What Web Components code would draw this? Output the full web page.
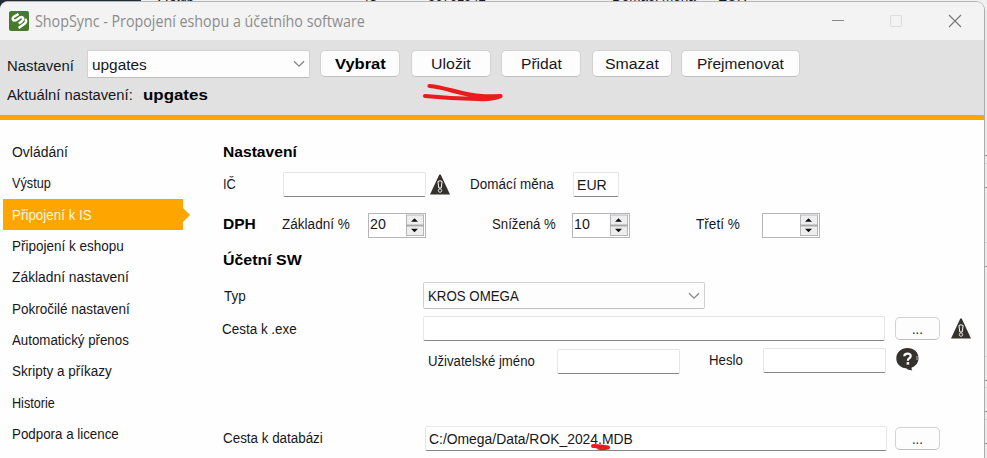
<!DOCTYPE html>
<html lang="cs">
<head>
<meta charset="utf-8">
<title>ShopSync</title>
<style>
html,body{margin:0;height:458px;overflow:hidden}
body{font-family:"Liberation Sans",Arial,sans-serif;font-size:15.5px;color:#17171c}
</style>
</head>
<body>
<shop-sync></shop-sync>
<script>
const sheet = (el, html) => { el.attachShadow({mode:'open'}).innerHTML = html; };

/* A single line of text fitted horizontally to the width in "w". */
class FitText extends HTMLElement {
  connectedCallback() {
    const w = +this.getAttribute('w');
    sheet(this, `<style>:host{display:block;flex:none;width:${w}px;height:20px;line-height:20px;white-space:nowrap}
      :host([b]){font-weight:bold;color:#000}
      span{display:inline-block;transform-origin:0 50%;margin-left:-.3px}</style><span><slot></slot></span>`);
    const s = this.shadowRoot.querySelector('span');
    const n = s.getBoundingClientRect().width;
    if (n) s.style.transform = `scaleX(${(w + .8) / n})`;
  }
}

/* Horizontal row; its height comes from the "h" attribute. */
class UiRow extends HTMLElement {
  connectedCallback() {
    sheet(this, `<style>:host{display:flex;align-items:center;flex:none;height:${this.getAttribute('h')}px}</style><slot></slot>`);
  }
}

class UiButton extends HTMLElement {
  connectedCallback() {
    sheet(this, `<style>:host{display:flex;flex:none;box-sizing:border-box;width:${this.getAttribute('w')}px;height:${this.getAttribute('h') || 27}px;
      align-items:center;justify-content:center;background:#fdfdfd;border:1px solid #d2d2d2;border-bottom-color:#bebebe;border-radius:5px}</style><slot></slot>`);
  }
}

class UiField extends HTMLElement {
  connectedCallback() {
    sheet(this, `<style>:host{display:flex;flex:none;align-items:center;box-sizing:border-box;width:${this.getAttribute('w')}px;height:25px;
      padding-left:3px;background:#fff;border:1px solid #e6e6e6;border-bottom-color:#868686;border-radius:2px}</style><slot></slot>`);
  }
}

class UiSelect extends HTMLElement {
  connectedCallback() {
    sheet(this, `<style>:host{display:flex;flex:none;align-items:center;justify-content:space-between;box-sizing:border-box;width:${this.getAttribute('w')}px;height:${this.getAttribute('h')}px;
      padding:0 4px 0 4px;background:#fdfdfd;border:1px solid #d0d0d0;border-bottom-color:#bdbdbd;border-radius:2px}svg{display:block}</style>
      <slot></slot><svg width="12" height="8" viewBox="0 0 12 8"><path d="M1 1.2 6 6.2 11 1.2" fill="none" stroke="#858585" stroke-width="1.3"/></svg>`);
  }
}

class UiSpin extends HTMLElement {
  connectedCallback() {
    sheet(this, `<style>:host{display:flex;flex:none;align-items:center;justify-content:space-between;box-sizing:border-box;width:58px;height:25px;
      padding:0 1px 0 1px;background:#fff;border:1px solid #b4b4bc}svg{display:block}.v{flex:1;margin-top:-2px}</style>
      <div class="v"><slot></slot></div><svg width="18" height="23" viewBox="0 0 18 23">
      <rect x=".5" y="1" width="17" height="20.5" fill="#eee" stroke="#b5b5b5"/>
      <path d="M0 11.5H18" stroke="#aaa" stroke-width="2"/><path d="M5 7.8 8.5 4.2 12 7.8ZM5 14.7H12L8.5 18.3Z" fill="#111"/></svg>`);
  }
}

class WarnIcon extends HTMLElement {
  connectedCallback() {
    sheet(this, `<style>:host{display:block;flex:none}svg{display:block}</style><svg width="20" height="21" viewBox="0 0 20 21">
      <path d="M9.3.5H10.7L20 20.5H0Z" fill="#35312d"/><path d="M7.900 7.500Q10 6 12.100 7.500L11.200 14H8.800Z" fill="#35312d" stroke="#fff" stroke-width="1"/><circle cx="10" cy="16.600" r="1.700" fill="#35312d" stroke="#eee" stroke-width=".9"/></svg>`);
  }
}

class HelpIcon extends HTMLElement {
  connectedCallback() {
    sheet(this, `<style>:host{display:block;flex:none}svg{display:block}</style><svg width="23" height="23" viewBox="0 0 23 23">
      <path d="M11.5 0C18 0 22.5 4.2 22.5 10C22.5 14.5 20 18 15.7 19.6Q15 21.2 16.3 22.4Q12 22 10 20.3C4 19.8.3 15.5.3 10.2C.3 4.4 5 0 11.5 0Z" fill="#35312d"/>
      <path d="M8.3 8.2Q8.4 5.6 11.6 5.6Q14.7 5.6 14.7 8.1Q14.7 9.6 13 10.5Q11.9 11.1 11.9 12.7" fill="none" stroke="#fff" stroke-width="2.2"/><rect x="10.6" y="14.2" width="2.6" height="2.4" fill="#fff"/><path d="M21 8V12" stroke="#bbb" stroke-width="1"/></svg>`);
  }
}

class TitleBar extends HTMLElement {
  connectedCallback() {
    sheet(this, `<style>:host{display:flex;align-items:center;height:38px;flex:none;background:#f3f3f3;box-sizing:border-box;padding-left:9px;
      font-family:"Open Sans","Noto Sans",sans-serif;font-size:16px;color:#8c8c8c}
      svg{display:block;flex:none}.c{margin-left:468px}fit-text{margin:-1px 0 0 6px}</style>
      <svg width="20" height="20" viewBox="0 0 20 20"><rect width="20" height="20" rx="2" fill="#477a2d"/>
      <path d="M9.500 3 4.600 6Q2.800 8 4.600 9.400Q6 10 8.200 8.400L11.300 6.300Q13.500 5.400 14.200 7.200Q14.500 8.600 12.800 10.200L9.800 12.600" fill="none" stroke="#fff" stroke-width="2.500"/>
      <path d="M16.300 7.800Q18.200 10.500 15.600 12.800L9.600 17" fill="none" stroke="#fff" stroke-width="2.300"/></svg>
      <fit-text w="329">ShopSync - Propojení eshopu a účetního software</fit-text>
      <svg class="c" width="130" height="14" viewBox="0 0 130 14"><path d="M0 6.5H12" stroke="#8a8a8a"/><rect x="58.500" y="1.500" width="11" height="11" rx="1.500" fill="none" stroke="#dcdcdc"/><path d="M117 1 129 13M129 1 117 13" stroke="#777" stroke-width="1.100"/></svg>`);
  }
}

class TopTools extends HTMLElement {
  connectedCallback() {
    sheet(this, `<style>:host{display:block;position:relative;flex:none;background:#e1e1e1;border-bottom:5px solid #ffa500;padding:10px 0 0 7px;box-sizing:content-box;height:65px}
      .r{display:flex;align-items:flex-start}.l{margin-top:6px}ui-button{margin-top:0;padding-top:1px}
      ui-select fit-text{margin-top:2px}
      .s{display:flex;margin-top:7px}.s :last-child{margin-left:11px}
      .ink{position:absolute;left:420px;top:40px}</style>
      <div class="r"><fit-text class="l" w="66">Nastavení</fit-text>
      <ui-select w="223" h="28" style="margin-left:14px"><fit-text w="54">upgates</fit-text></ui-select>
      <ui-button w="80" style="margin-left:10px"><fit-text b w="50">Vybrat</fit-text></ui-button>
      <ui-button w="80" style="margin-left:11px"><fit-text w="39">Uložit</fit-text></ui-button>
      <ui-button w="80" style="margin-left:10px"><fit-text w="40">Přidat</fit-text></ui-button>
      <ui-button w="80" style="margin-left:11px"><fit-text w="53">Smazat</fit-text></ui-button>
      <ui-button w="119" style="margin-left:9px"><fit-text w="86">Přejmenovat</fit-text></ui-button></div>
      <div class="s"><fit-text w="125">Aktuální nastavení:</fit-text><fit-text b w="64">upgates</fit-text></div>
      <svg class="ink" width="90" height="26" viewBox="420 80 90 26"><path d="M429.500 86C446 87.500 458 93.500 476 95.500Q488 96.700 500.500 96.200Q494 99.500 478 99Q452 98.700 425 96M478 97H494" fill="none" stroke="#e81c1c" stroke-width="4.200" stroke-linecap="round" stroke-linejoin="round"/></svg>`);
  }
}

class NavItem extends HTMLElement {
  connectedCallback() {
    sheet(this, `<style>:host{display:flex;align-items:center;height:31.3px;padding-left:9px;box-sizing:border-box;width:180px}
      :host([on]){background:#ffa500;color:#fff6e2}
      i{display:none}:host([on]) i{display:block;flex:none;margin-left:auto;margin-right:-7px;border:7px solid transparent;border-right:0;border-left-color:#ffa500}</style>
      <slot></slot><i></i>`);
  }
}

class SideNav extends HTMLElement {
  connectedCallback() {
    const items = [['Ovládání',55],['Výstup',38],['Připojení k IS',79],['Připojení k eshopu',111],['Základní nastavení',116],['Pokročilé nastavení',117],['Automatický přenos',116],['Skripty a příkazy',99],['Historie',42],['Podpora a licence',106]];
    sheet(this, `<style>:host{display:block;flex:none;width:220px;padding:16.500px 0 0 3px;box-sizing:border-box}</style>` +
      items.map(([t,w],i)=>`<nav-item${i===2?' on':''}><fit-text w="${w}">${t}</fit-text></nav-item>`).join(''));
  }
}

class SettingsForm extends HTMLElement {
  connectedCallback() {
    const m = n => `style="margin-left:${n}px"`;
    sheet(this, `<style>:host{display:flex;flex-direction:column;flex:1;padding-top:16px}
      .db{position:relative}.ink{position:absolute;left:370px;top:18px}</style>
      <ui-row h="32"><fit-text b w="73" ${m(3)}>Nastavení</fit-text></ui-row>
      <ui-row h="32"><fit-text w="12" ${m(3)}>IČ</fit-text><ui-field w="143" ${m(48)}></ui-field><warn-icon ${m(4)}></warn-icon>
        <fit-text w="83" ${m(20)}>Domácí měna</fit-text><ui-field w="46" style="margin:1px 0 0 20px"><fit-text w="29">EUR</fit-text></ui-field></ui-row>
      <ui-row h="48"><fit-text b w="32" ${m(3)}>DPH</fit-text><fit-text w="67" ${m(27)}>Základní %</fit-text><ui-spin style="margin:2px 0 0 19px"><fit-text w="15">20</fit-text></ui-spin>
        <fit-text w="63" ${m(66)}>Snížená %</fit-text><ui-spin style="margin:2px 0 0 17px"><fit-text w="15">10</fit-text></ui-spin>
        <fit-text w="43" ${m(66)}>Třetí %</fit-text><ui-spin style="margin:2px 0 0 23px"></ui-spin></ui-row>
      <ui-row h="24"><fit-text b w="78" ${m(3)}>Účetní SW</fit-text></ui-row>
      <ui-row h="47"><fit-text w="21" ${m(4)}>Typ</fit-text><ui-select w="282" h="27" ${m(178)}><fit-text w="90">KROS OMEGA</fit-text></ui-select></ui-row>
      <ui-row h="19"><fit-text w="74" ${m(2)}>Cesta k .exe</fit-text><ui-field w="462" ${m(127)}></ui-field>
        <ui-button w="45" h="23" ${m(10)}><fit-text w="10">...</fit-text></ui-button><warn-icon ${m(11)}></warn-icon></ui-row>
      <ui-row h="46"><fit-text w="106" ${m(208)}>Uživatelské jméno</fit-text><ui-field w="123" ${m(23)}></ui-field>
        <fit-text w="33" style="margin:-2px 0 0 29px">Heslo</fit-text><ui-field w="123" style="margin:-2px 0 0 21px"></ui-field><help-icon style="margin:-3px 0 0 10px"></help-icon></ui-row>
      <ui-row h="108" class="db"><fit-text w="99" ${m(3)}>Cesta k databázi</fit-text><ui-field w="462" style="margin:1px 0 0 103px"><fit-text w="203">C:/Omega/Data/ROK_2024.MDB</fit-text></ui-field>
        <ui-button w="45" h="23" style="margin:1px 0 0 8px"><fit-text w="10">...</fit-text></ui-button>
        <svg class="ink" style="top:59px" width="22" height="9" viewBox="0 0 22 9"><path d="M3 3Q10 2.800 18 4.500Q12 6 8 4.500" fill="none" stroke="#e81c1c" stroke-width="4" stroke-linecap="round" stroke-linejoin="round"/></svg></ui-row>`);
  }
}

/* The page behind the window: a strip above it and one to its right. */
class BackPage extends HTMLElement {
  connectedCallback() {
    const lines = [[155,1],[163],[187,1],[242],[266,1],[356],[380,1],[387],[411,1],[419],[443,1]];
    sheet(this, `<style>:host{position:absolute;inset:0;background:#ededed;overflow:hidden}
      .top{height:10px;overflow:hidden;background:linear-gradient(90deg,#202b35 141px,#f0f0f0 141px)}
      .t{display:flex;margin-top:-14px;padding-left:155px}svg{position:absolute;right:0;top:0}</style>
      <div class="top"><div class="t"><fit-text w="38">Výstup</fit-text><fit-text w="12" style="margin-left:172px">IČ</fit-text><fit-text w="57" style="margin-left:51px">36761542</fit-text><fit-text w="83" style="margin-left:127px">Domácí měna</fit-text><fit-text w="28" style="margin-left:23px">EUR</fit-text></div></div>
      <svg width="3" height="458">${lines.map(([y,d])=>`<path d="M0 ${y}.5H3" stroke="${d?'#909090':'#d6d6d6'}"/>`).join('')}</svg>`);
  }
}

class ShopSync extends HTMLElement {
  connectedCallback() {
    sheet(this, `<style>:host{display:block;position:relative;width:987px;height:458px;overflow:hidden;padding-top:1px;box-sizing:border-box}
      .win{position:relative;display:flex;flex-direction:column;width:984px;height:457px;box-sizing:content-box;border-top:1px solid #b6b6b6;border-right:1px solid #acacac;border-radius:8px 9px 0 0;overflow:hidden;background:#fefefe}
      .body{display:flex;flex:1}</style>
      <back-page></back-page>
      <div class="win"><title-bar></title-bar><top-tools></top-tools><div class="body"><side-nav></side-nav><settings-form></settings-form></div></div>`);
  }
}
[['fit-text',FitText],['ui-row',UiRow],['ui-button',UiButton],['ui-field',UiField],['ui-select',UiSelect],['ui-spin',UiSpin],['warn-icon',WarnIcon],['help-icon',HelpIcon],['title-bar',TitleBar],['nav-item',NavItem],['top-tools',TopTools],['side-nav',SideNav],['settings-form',SettingsForm],['back-page',BackPage],['shop-sync',ShopSync]].forEach(([n,c])=>customElements.define(n,c));
</script>
</body>
</html>
